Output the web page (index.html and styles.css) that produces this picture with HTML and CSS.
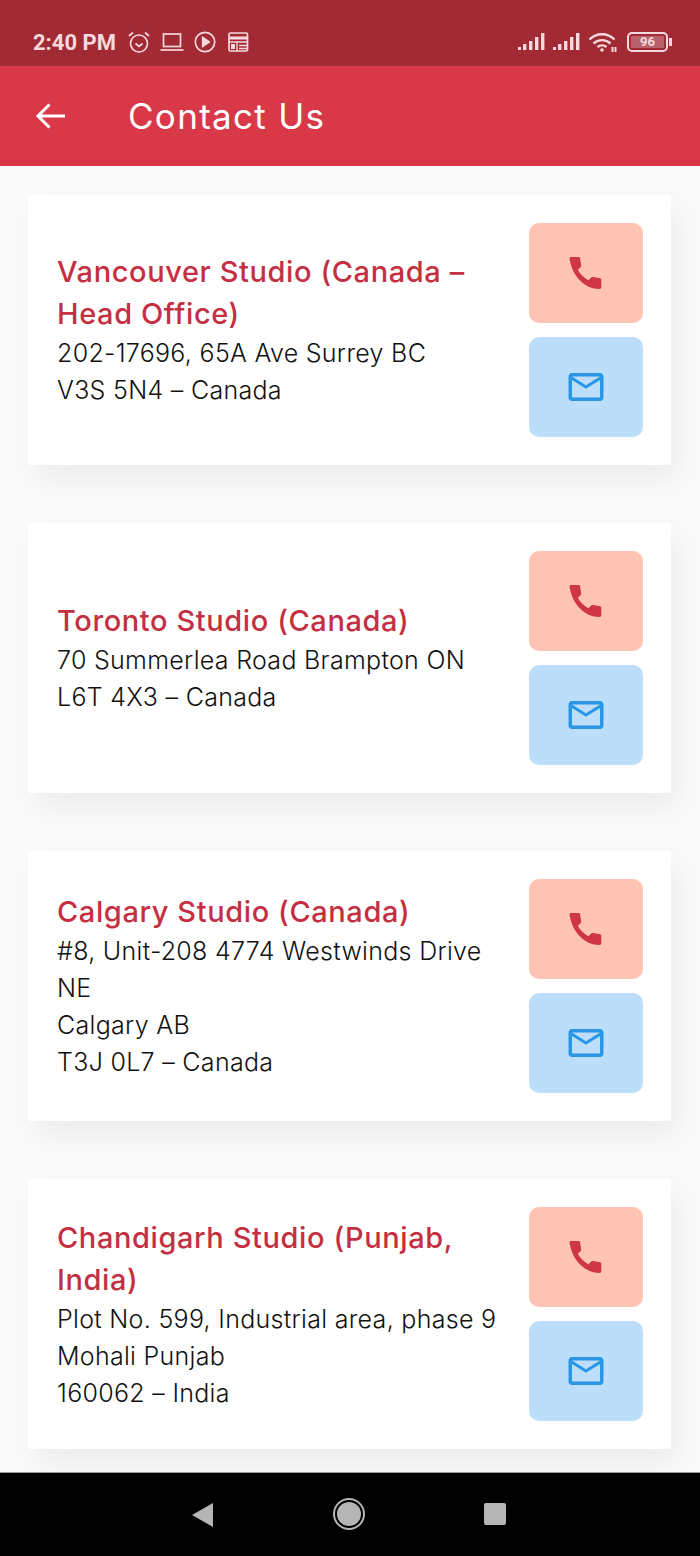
FILE: index.html
```html
<!DOCTYPE html>
<html lang="en">
<head>
    <meta charset="UTF-8">
    <meta name="viewport" content="width=device-width, initial-scale=1.0">
    <title>Contact Us</title>
    <link rel="stylesheet" href="styles.css">
</head>
<body>
    <div class="status-bar">
        <div class="status-left">
            <span class="time">2:40 PM</span>
            <svg class="status-icon" width="24" height="24" viewBox="0 0 24 24" fill="none" stroke="#f6d9dc" stroke-width="1.7">
                <circle cx="12" cy="13.5" r="8.5"/>
                <path d="M8.500 13.500l3.500 3 3.500-3M2 6l4-3.500M22 6l-4-3.500"/>
            </svg>
            <svg class="status-icon" width="24" height="24" viewBox="0 0 24 24" fill="none" stroke="#f6d9dc" stroke-width="1.7">
                <rect x="3.500" y="4" width="17" height="12.500"/>
                <path d="M0.500 20h23"/>
            </svg>
            <svg class="status-icon" width="24" height="24" viewBox="0 0 24 24" fill="none" stroke="#f6d9dc" stroke-width="1.7">
                <circle cx="12" cy="12" r="9.700"/>
                <path d="M9.700 7.500l6.500 4.500-6.500 4.500z" fill="#f6d9dc"/>
            </svg>
            <svg class="status-icon" width="24" height="24" viewBox="0 0 24 24" fill="none" stroke="#f6d9dc" stroke-width="1.7">
                <rect x="3" y="3" width="18.500" height="18" rx="1.500"/>
                <path d="M3 8h18.500" stroke-width="3"/>
                <path d="M3 12h18.500M11 12v9M13 15.500h8M13 18.500h8" stroke-width="1.400"/>
                <rect x="5" y="14" width="4" height="5" fill="#f6d9dc" stroke="none"/>
            </svg>
        </div>
        <div class="status-right">
            <svg width="28" height="20" viewBox="0 0 28 20" fill="#f6d9dc">
                <path d="M0 15h3v3H0zM5 12h3.400v6H5zM11 9h3.400v9H11zM17 5h3.400v13H17zM23 1h3.400v17H23z"/>
            </svg>
            <svg width="28" height="20" viewBox="0 0 28 20" fill="#f6d9dc">
                <path d="M0 15h3v3H0zM5 12h3.400v6H5zM11 9h3.400v9H11zM17 5h3.400v13H17zM23 1h3.400v17H23z"/>
            </svg>
            <svg class="wifi" width="30" height="22" viewBox="0 0 30 22" fill="none" stroke="#f6d9dc" stroke-width="2.400">
                <path d="M1.500 8.500C8.500 1.500 19.500 1.500 26.500 8.500M5.500 12.500c4.800-4.500 12.200-4.500 17 0M9.500 16c2.600-2.200 6.400-2.200 9 0"/>
                <circle cx="14" cy="19" r="1.800" fill="#f6d9dc" stroke="none"/>
                <path d="M24.500 16v5M27.500 16v5" stroke-width="2"/>
            </svg>
            <div class="battery">
                <div class="battery-body"><span class="battery-level">96</span></div>
                <div class="battery-cap"></div>
            </div>
        </div>
    </div>

    <header class="app-bar">
        <svg class="back" width="32" height="32" viewBox="0 0 32 32" fill="none" stroke="#fff" stroke-width="3">
            <path d="M31 16H4M15.500 4.500L4 16l11.500 11.500"/>
        </svg>
        <h1>Contact Us</h1>
    </header>

    <main class="content">
        <div class="card">
            <div class="info">
                <h2>Vancouver Studio (Canada – Head Office)</h2>
                <p>202-17696, 65A Ave Surrey BC<br>V3S 5N4 – Canada</p>
            </div>
            <div class="actions">
                <div class="action call">
                    <svg width="42" height="42" viewBox="0 0 42 42" fill="#d03546"><path d="M6 5h7.500c.8 0 1.300.5 1.500 1.200l1.200 7c.1.700-.1 1.300-.6 1.800l-2.800 2.800c2.500 4.500 6 8 10.700 10.500l2.700-2.800c.5-.5 1.200-.7 1.900-.5l7 1.300c.7.2 1.200.8 1.200 1.500v7.500c0 1-.6 1.700-1.700 1.700C19.500 37 7 24 4.500 6.500 4.500 5.600 5 5 6 5z"/></svg>
                </div>
                <div class="action mail">
                    <svg width="42" height="42" viewBox="0 0 24 24" fill="#2a96e8"><path d="M20 4H4c-1.100 0-2 .900-2 2v12c0 1.100.900 2 2 2h16c1.100 0 2-.900 2-2V6c0-1.100-.900-2-2-2zm0 14H4V8l8 5 8-5v10zm-8-7L4 6h16l-8 5z"/></svg>
                </div>
            </div>
        </div>

        <div class="card">
            <div class="info">
                <h2>Toronto Studio (Canada)</h2>
                <p>70 Summerlea Road Brampton ON<br>L6T 4X3 – Canada</p>
            </div>
            <div class="actions">
                <div class="action call">
                    <svg width="42" height="42" viewBox="0 0 42 42" fill="#d03546"><path d="M6 5h7.500c.8 0 1.300.5 1.500 1.200l1.200 7c.1.700-.1 1.300-.6 1.800l-2.800 2.800c2.500 4.500 6 8 10.700 10.500l2.700-2.800c.5-.5 1.200-.7 1.900-.5l7 1.300c.7.2 1.200.8 1.200 1.500v7.500c0 1-.6 1.700-1.700 1.700C19.500 37 7 24 4.500 6.500 4.500 5.600 5 5 6 5z"/></svg>
                </div>
                <div class="action mail">
                    <svg width="42" height="42" viewBox="0 0 24 24" fill="#2a96e8"><path d="M20 4H4c-1.100 0-2 .900-2 2v12c0 1.100.900 2 2 2h16c1.100 0 2-.900 2-2V6c0-1.100-.900-2-2-2zm0 14H4V8l8 5 8-5v10zm-8-7L4 6h16l-8 5z"/></svg>
                </div>
            </div>
        </div>

        <div class="card">
            <div class="info">
                <h2>Calgary Studio (Canada)</h2>
                <p>#8, Unit-208 4774 Westwinds Drive<br>NE<br>Calgary AB<br>T3J 0L7 – Canada</p>
            </div>
            <div class="actions">
                <div class="action call">
                    <svg width="42" height="42" viewBox="0 0 42 42" fill="#d03546"><path d="M6 5h7.500c.8 0 1.300.5 1.500 1.200l1.200 7c.1.700-.1 1.300-.6 1.800l-2.800 2.800c2.500 4.500 6 8 10.700 10.500l2.700-2.800c.5-.5 1.200-.7 1.900-.5l7 1.300c.7.2 1.200.8 1.200 1.500v7.500c0 1-.6 1.700-1.700 1.700C19.500 37 7 24 4.500 6.500 4.500 5.600 5 5 6 5z"/></svg>
                </div>
                <div class="action mail">
                    <svg width="42" height="42" viewBox="0 0 24 24" fill="#2a96e8"><path d="M20 4H4c-1.100 0-2 .900-2 2v12c0 1.100.900 2 2 2h16c1.100 0 2-.900 2-2V6c0-1.100-.900-2-2-2zm0 14H4V8l8 5 8-5v10zm-8-7L4 6h16l-8 5z"/></svg>
                </div>
            </div>
        </div>

        <div class="card">
            <div class="info">
                <h2>Chandigarh Studio (Punjab, India)</h2>
                <p>Plot No. 599, Industrial area, phase 9<br>Mohali Punjab<br>160062 – India</p>
            </div>
            <div class="actions">
                <div class="action call">
                    <svg width="42" height="42" viewBox="0 0 42 42" fill="#d03546"><path d="M6 5h7.500c.8 0 1.300.5 1.500 1.200l1.200 7c.1.700-.1 1.300-.6 1.800l-2.800 2.800c2.500 4.500 6 8 10.700 10.500l2.700-2.800c.5-.5 1.200-.7 1.900-.5l7 1.300c.7.2 1.200.8 1.200 1.500v7.500c0 1-.6 1.700-1.700 1.700C19.500 37 7 24 4.500 6.500 4.500 5.600 5 5 6 5z"/></svg>
                </div>
                <div class="action mail">
                    <svg width="42" height="42" viewBox="0 0 24 24" fill="#2a96e8"><path d="M20 4H4c-1.100 0-2 .900-2 2v12c0 1.100.900 2 2 2h16c1.100 0 2-.900 2-2V6c0-1.100-.900-2-2-2zm0 14H4V8l8 5 8-5v10zm-8-7L4 6h16l-8 5z"/></svg>
                </div>
            </div>
        </div>
    </main>

    <nav class="nav-bar">
        <div class="nav-back"></div>
        <div class="nav-home"></div>
        <div class="nav-recent"></div>
    </nav>
</body>
</html>
```

FILE: styles.css
```css
html, body {
    margin: 0;
    padding: 0;
}
body {
    width: 700px;
    height: 1556px;
    display: flex;
    flex-direction: column;
    overflow: hidden;
    background-color: #fafafa;
    font-family: "Inter", "Open Sans", sans-serif;
}

/* status bar */
.status-bar {
    height: 66px;
    padding: 18px 28px 0 33px;
    box-sizing: border-box;
    display: flex;
    justify-content: space-between;
    align-items: center;
    background-color: #a22a35;
    color: #f6d9dc;
}
.status-left {
    display: flex;
    align-items: center;
    gap: 9px;
}
.time {
    font-family: "Roboto", sans-serif;
    font-size: 22px;
    font-weight: 700;
    margin-right: 2px;
}
.status-right {
    display: flex;
    align-items: center;
    gap: 7px;
}
.battery {
    display: flex;
    align-items: center;
    margin-left: 2px;
}
.battery-body {
    width: 41px;
    height: 20px;
    padding: 2px;
    box-sizing: border-box;
    border: 2px solid #f6d9dc;
    border-radius: 5px;
}
.battery-level {
    display: block;
    height: 100%;
    background-color: #b9626b;
    font-family: "Roboto", sans-serif;
    font-size: 13px;
    font-weight: 700;
    line-height: 12px;
    text-align: center;
}
.battery-cap {
    width: 3px;
    height: 8px;
    margin-left: 1px;
    background-color: #f6d9dc;
}

/* app bar */
.app-bar {
    height: 100px;
    padding-left: 34px;
    display: flex;
    align-items: center;
    background-color: #d93848;
}
.app-bar h1 {
    margin: 0 0 0 62px;
    color: #fff;
    font-size: 35px;
    font-weight: 400;
    letter-spacing: 1.300px;
}

/* cards */
.content {
    flex: 1;
    padding: 29px 29px 0 28px;
    display: flex;
    flex-direction: column;
    gap: 58px;
}
.card {
    height: 270px;
    padding: 28px;
    box-sizing: border-box;
    display: flex;
    align-items: center;
    background-color: #fff;
    box-shadow: 8px 14px 28px rgba(0, 0, 0, 0.06);
}
.info {
    flex: 1;
    padding-left: 1px;
}
.info h2 {
    margin: 0;
    color: #c52f42;
    font-size: 29px;
    font-weight: 500;
    line-height: 42px;
    letter-spacing: 0.6px;
}
.info p {
    margin: 0;
    color: #111;
    font-size: 25px;
    font-weight: 300;
    line-height: 37px;
    letter-spacing: 0.3px;
}
.actions {
    width: 114px;
    margin-left: 14px;
    flex-shrink: 0;
    display: flex;
    flex-direction: column;
    gap: 14px;
}
.action {
    height: 100px;
    border-radius: 10px;
    display: flex;
    justify-content: center;
    align-items: center;
}
.call {
    background-color: #ffc4b4;
}
.mail {
    background-color: #bcdefa;
}

/* bottom nav */
.nav-bar {
    height: 84px;
    position: relative;
    background-color: #000;
    border-top: 1px solid #999;
    box-sizing: border-box;
}
.nav-back {
    position: absolute;
    left: 192px;
    top: 30px;
    width: 0;
    height: 0;
    border-top: 12px solid transparent;
    border-bottom: 12px solid transparent;
    border-right: 21px solid #b5b5b5;
}
.nav-home {
    position: absolute;
    left: 333px;
    top: 25px;
    width: 24px;
    height: 24px;
    border-radius: 50%;
    background-color: #b5b5b5;
    border: 2px solid #000;
    box-shadow: 0 0 0 2px #b5b5b5;
    margin: 2px;
}
.nav-recent {
    position: absolute;
    left: 484px;
    top: 30px;
    width: 22px;
    height: 22px;
    border-radius: 2px;
    background-color: #b5b5b5;
}
```
